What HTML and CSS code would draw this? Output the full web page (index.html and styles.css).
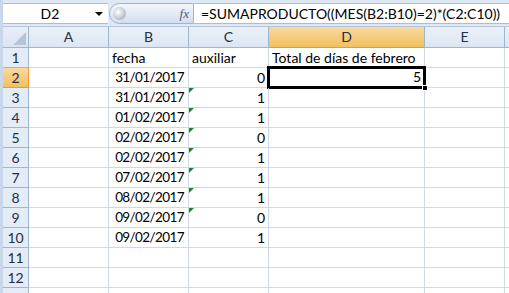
FILE: index.html
```html
<!DOCTYPE html>
<html lang="es">
<head>
  <meta charset="UTF-8">
  <title>Libro1</title>
  <link rel="stylesheet" href="styles.css">
</head>
<body>

<div class="app">
  <div class="formula-bar">
    <div class="name-box">
      <span class="cell-ref">D2</span>
      <span class="caret"></span>
    </div>
    <div class="fx-area">
      <span class="knob"></span>
      <span class="fx">fx</span>
    </div>
    <div class="formula">=SUMAPRODUCTO((MES(B2:B10)=2)*(C2:C10))</div>
  </div>

  <div class="sheet">
    <div class="corner"></div>
    <div class="col-head">A</div>
    <div class="col-head">B</div>
    <div class="col-head">C</div>
    <div class="col-head active">D</div>
    <div class="col-head">E</div>
    <div class="col-head"></div>

    <div class="row-head">1</div>
    <div class="cell"></div>
    <div class="cell">fecha</div>
    <div class="cell">auxiliar</div>
    <div class="cell overflow">Total de días de febrero</div>
    <div class="cell"></div>
    <div class="cell"></div>

    <div class="row-head active">2</div>
    <div class="cell"></div>
    <div class="cell num date">31/01/2017</div>
    <div class="cell num">0</div>
    <div class="cell num selected">5<span class="handle"></span></div>
    <div class="cell"></div>
    <div class="cell"></div>

    <div class="row-head">3</div>
    <div class="cell"></div>
    <div class="cell num date">31/01/2017</div>
    <div class="cell num flag">1</div>
    <div class="cell"></div>
    <div class="cell"></div>
    <div class="cell"></div>

    <div class="row-head">4</div>
    <div class="cell"></div>
    <div class="cell num date">01/02/2017</div>
    <div class="cell num flag">1</div>
    <div class="cell"></div>
    <div class="cell"></div>
    <div class="cell"></div>

    <div class="row-head">5</div>
    <div class="cell"></div>
    <div class="cell num date">02/02/2017</div>
    <div class="cell num flag">0</div>
    <div class="cell"></div>
    <div class="cell"></div>
    <div class="cell"></div>

    <div class="row-head">6</div>
    <div class="cell"></div>
    <div class="cell num date">02/02/2017</div>
    <div class="cell num flag">1</div>
    <div class="cell"></div>
    <div class="cell"></div>
    <div class="cell"></div>

    <div class="row-head">7</div>
    <div class="cell"></div>
    <div class="cell num date">07/02/2017</div>
    <div class="cell num flag">1</div>
    <div class="cell"></div>
    <div class="cell"></div>
    <div class="cell"></div>

    <div class="row-head">8</div>
    <div class="cell"></div>
    <div class="cell num date">08/02/2017</div>
    <div class="cell num flag">1</div>
    <div class="cell"></div>
    <div class="cell"></div>
    <div class="cell"></div>

    <div class="row-head">9</div>
    <div class="cell"></div>
    <div class="cell num date">09/02/2017</div>
    <div class="cell num flag">0</div>
    <div class="cell"></div>
    <div class="cell"></div>
    <div class="cell"></div>

    <div class="row-head">10</div>
    <div class="cell"></div>
    <div class="cell num date">09/02/2017</div>
    <div class="cell num">1</div>
    <div class="cell"></div>
    <div class="cell"></div>
    <div class="cell"></div>

    <div class="row-head">11</div>
    <div class="cell"></div>
    <div class="cell"></div>
    <div class="cell"></div>
    <div class="cell"></div>
    <div class="cell"></div>
    <div class="cell"></div>

    <div class="row-head">12</div>
    <div class="cell"></div>
    <div class="cell"></div>
    <div class="cell"></div>
    <div class="cell"></div>
    <div class="cell"></div>
    <div class="cell"></div>

    <div class="row-head"></div>
    <div class="cell"></div>
    <div class="cell"></div>
    <div class="cell"></div>
    <div class="cell"></div>
    <div class="cell"></div>
    <div class="cell"></div>
  </div>
</div>

</body>
</html>
```

FILE: styles.css
```css
body {
  margin: 0;
  padding: 0;
  background-color: #fff;
  font-family: Lato, "Open Sans", sans-serif;
  font-size: 14px;
  color: #000;
  overflow: hidden;
}

.app {
  width: 509px;
  height: 293px;
  border-left: 3px solid #c9d7ea;
  box-sizing: border-box;
  overflow: hidden;
}

.formula-bar {
  display: flex;
  height: 27px;
  padding-top: 3px;
  box-sizing: border-box;
  background-color: #dfe8f5;
  border-bottom: 1px solid #b5c6dc;
}

.name-box {
  width: 105px;
  height: 21px;
  background: #fff;
  border-top: 1px solid #a9bdd6;
  border-bottom: 1px solid #a9bdd6;
  box-sizing: border-box;
  display: flex;
  align-items: center;
}

.cell-ref {
  flex: 1;
  text-align: center;
  padding-left: 2px;
}

.caret {
  width: 0;
  height: 0;
  border-left: 4px solid transparent;
  border-right: 4px solid transparent;
  border-top: 4px solid #000;
  margin-right: 5px;
}

.fx-area {
  width: 85px;
  height: 21px;
  box-sizing: border-box;
  border: 1px solid #9fb3cd;
  border-radius: 11px 0 0 11px;
  background: linear-gradient(#f2f6fb, #d3dfef);
  display: flex;
  align-items: center;
  justify-content: space-between;
  padding: 0 4px 0 3px;
  margin-left: 1px;
}

.knob {
  width: 13px;
  height: 13px;
  border-radius: 50%;
  background: radial-gradient(circle at 40% 40%, #ffffff 0, #d4d9e0 40%, #8f9aa8 100%);
}

.fx {
  font-family: "Liberation Serif", serif;
  font-style: italic;
  font-size: 13px;
  color: #4d5d73;
}

.formula {
  flex: 1;
  height: 21px;
  background: #fff;
  border-top: 1px solid #a9bdd6;
  border-bottom: 1px solid #a9bdd6;
  box-sizing: border-box;
  padding-left: 7px;
  line-height: 19px;
  white-space: nowrap;
}

.sheet {
  display: grid;
  grid-template-columns: 26px 80px 80px 80px 156px 80px 80px;
  grid-template-rows: 21px repeat(13, 20px);
}

.sheet > div {
  box-sizing: border-box;
  border-right: 1px solid #d0d7e5;
  border-bottom: 1px solid #d0d7e5;
  white-space: nowrap;
  line-height: 19px;
  padding: 0 3px;
}

.sheet > .corner {
  background: linear-gradient(#e8eef7, #dbe5f2);
  border-right: 1px solid #9eb6ce;
  border-bottom: 1px solid #9eb6ce;
  position: relative;
}

.corner::after {
  content: "";
  position: absolute;
  right: 2px;
  bottom: 2px;
  border-left: 13px solid transparent;
  border-bottom: 13px solid #b4c4d9;
}

.sheet > .col-head {
  background: linear-gradient(#eaf0f8, #dce6f3);
  border-right: 1px solid #9eb6ce;
  border-bottom: 1px solid #9eb6ce;
  text-align: center;
  line-height: 20px;
  color: #1f2f44;
}

.sheet > .row-head {
  background: #e4ecf7;
  border-right: 1px solid #9eb6ce;
  border-bottom: 1px solid #9eb6ce;
  text-align: center;
  color: #1f2f44;
  padding: 0;
}

.sheet > .active {
  background: linear-gradient(#f9d99f, #f1c15f);
  border-bottom-color: #f29536;
}

.sheet > .row-head.active {
  background: linear-gradient(#f9d99f, #f1c15f);
  border-right-color: #f29536;
}

.num {
  text-align: right;
}

.sheet > .date {
  font-size: 13.5px;
  letter-spacing: -0.6px;
  padding-right: 4px;
}

.overflow {
  overflow: visible;
}

.flag {
  position: relative;
}

.flag::before {
  content: "";
  position: absolute;
  left: 0;
  top: 0;
  border-top: 5px solid #148a1c;
  border-right: 5px solid transparent;
}

.sheet > .selected {
  position: relative;
  border: none;
  box-shadow: inset 0 0 0 2px #000;
  outline: 1px solid #000;
  margin: -1px 0 0 -1px;
  padding-right: 4px;
  line-height: 20px;
}

.handle {
  position: absolute;
  right: -3px;
  bottom: -3px;
  width: 6px;
  height: 6px;
  background: #000;
  border: 1px solid #fff;
  box-sizing: border-box;
}
```
